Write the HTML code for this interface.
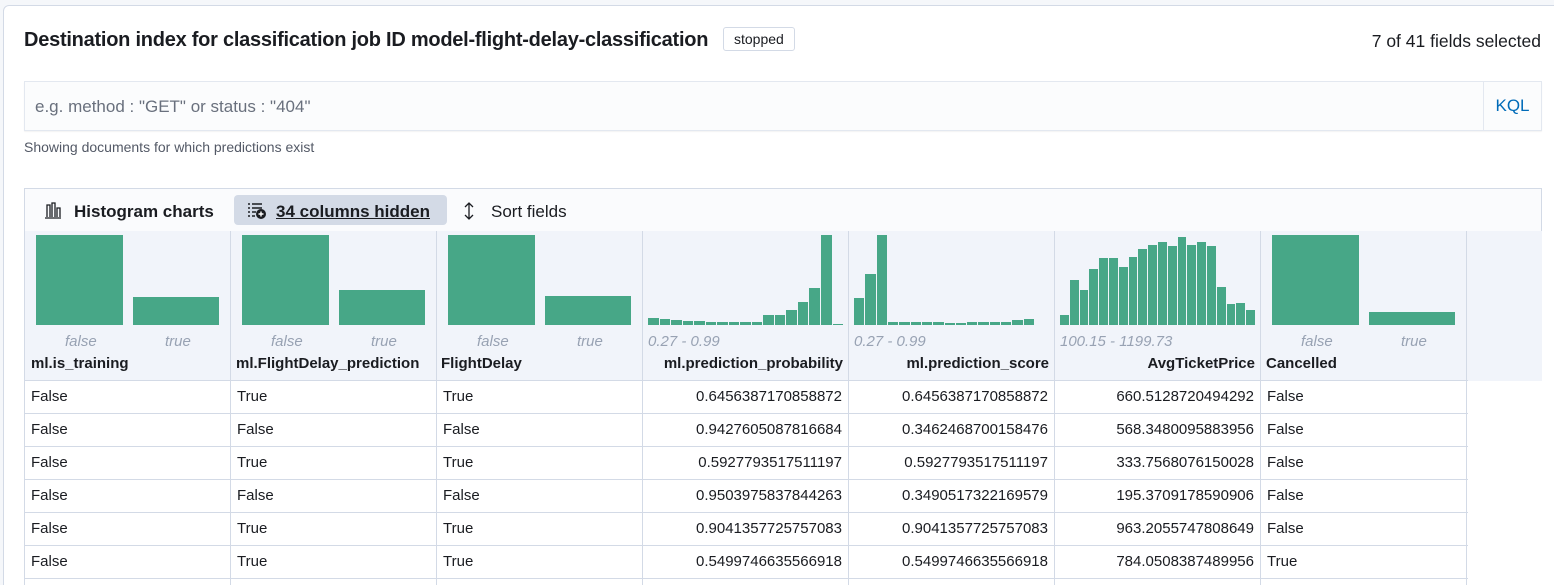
<!DOCTYPE html>
<html style="width:1554px;height:585px;overflow:hidden"><head><style>
*{box-sizing:border-box;margin:0;padding:0}
body{width:1554px;height:585px;overflow:hidden;background:#f5f7fa;font-family:"Liberation Sans",sans-serif;color:#1a1c21;position:relative}
.panel{position:absolute;left:3px;top:5px;width:1560px;height:600px;background:#fff;border:1px solid #d3dae6;border-radius:6px}
.a{position:absolute}
.title{left:24px;top:29px;font-size:20px;font-weight:bold;letter-spacing:-0.25px}
.badge{left:723px;top:27px;height:24px;padding:0 10px;border:1px solid #d3dae6;border-radius:3px;font-size:14px;line-height:22px}
.sel{right:13px;top:31px;font-size:17.5px}
.search{left:24px;top:81px;width:1518px;height:50px;background:#fbfcfd;border:1px solid #e3e8f0;box-shadow:0 1px 1px rgba(0,0,0,.05)}
.search .ph{position:absolute;left:10px;top:15px;font-size:17px;color:#69707d}
.search .kql{position:absolute;right:0;top:0;width:58px;height:48px;border-left:1px solid #e3e8f0;color:#006bb8;font-size:17px;line-height:48px;text-align:center}
.help{left:24px;top:139px;font-size:14px;color:#535966}
.tb{left:24px;top:188px;width:1518px;height:43px;background:#fafbfd;border:1px solid #d3dae6;border-bottom:none}
.tb span{position:absolute;top:13px;font-size:17px}
.hidden{position:absolute;left:209px;top:6px;width:213px;height:30px;background:#d3dae6;border-radius:4px}
.hdr{left:24px;top:231px;width:1518px;height:150px;background:#f1f4fa;border-left:1px solid #d3dae6}
.col{position:absolute;top:231px;width:206px;border-right:1px solid #d3dae6}
.h{height:150px}
.bars{position:absolute;left:5px;right:5px;top:4px;height:90px;display:flex;align-items:flex-end;gap:2px}
.bars i{flex:1;background:#47a787}
.bin{left:11px;right:11px;gap:10px}
.lbl{position:absolute;top:102px;font-size:15px;font-style:italic;color:#98a2b3}
.name{position:absolute;top:124px;font-size:15px;font-weight:bold}
.row{position:absolute;left:24px;width:1444px;height:33px;border-bottom:1px solid #d3dae6;font-size:15px;border-left:1px solid #d3dae6}
.row div{position:absolute;top:0;width:206px;height:33px;line-height:32px;padding:0 6px;border-right:1px solid #d3dae6}
.r{text-align:right}
</style></head><body>
<div class="panel"></div>
<div class="a title">Destination index for classification job ID model-flight-delay-classification</div>
<div class="a badge">stopped</div>
<div class="a sel">7 of 41 fields selected</div>
<div class="a search"><span class="ph">e.g. method : "GET" or status : "404"</span><span class="kql">KQL</span></div>
<div class="a help">Showing documents for which predictions exist</div>
<div class="a tb">
<svg style="position:absolute;left:19px;top:13px" width="18" height="17" viewBox="0 0 18 17" fill="none" stroke="#1a1c21" stroke-width="1.3"><path d="M1 16h16M3 15V3h3v12M8 15V1h3v14M13 15V6h3v9"/></svg>
<span style="left:49px;font-weight:bold">Histogram charts</span>
<div class="hidden"></div>
<svg style="position:absolute;left:222px;top:13px" width="20" height="18" viewBox="0 0 20 18"><path d="M1 2h2M5 2h10M1 6h2M5 6h10M1 10h2M5 10h4M1 14h2M5 14h3" stroke="#1a1c21" stroke-width="1.5"/><circle cx="14" cy="12" r="5" fill="#1a1c21"/><path d="M14 9.5v5M11.5 12h5" stroke="#fff" stroke-width="1.4"/></svg>
<span style="left:251px;font-weight:bold;text-decoration:underline">34 columns hidden</span>
<svg style="position:absolute;left:438px;top:13px" width="12" height="18" viewBox="0 0 12 18" fill="none" stroke="#1a1c21" stroke-width="1.3"><path d="M6 1v16M2 5l4-4 4 4M2 13l4 4 4-4"/></svg>
<span style="left:466px">Sort fields</span>
</div>
<div class="a hdr"></div>
<div class="col h" style="left:25px"><div class="bars bin"><i style="height:90px"></i><i style="height:28px"></i></div><span class="lbl" style="left:40px">false</span><span class="lbl" style="left:140px">true</span><span class="name" style="left:6px">ml.is_training</span></div>
<div class="col h" style="left:231px"><div class="bars bin"><i style="height:90px"></i><i style="height:35px"></i></div><span class="lbl" style="left:40px">false</span><span class="lbl" style="left:140px">true</span><span class="name" style="left:5px">ml.FlightDelay_prediction</span></div>
<div class="col h" style="left:437px"><div class="bars bin"><i style="height:90px"></i><i style="height:29px"></i></div><span class="lbl" style="left:40px">false</span><span class="lbl" style="left:140px">true</span><span class="name" style="left:4px">FlightDelay</span></div>
<div class="col h" style="left:643px"><div class="bars" style="gap:1px"><i style="height:7px"></i><i style="height:6px"></i><i style="height:5px"></i><i style="height:4px"></i><i style="height:4px"></i><i style="height:3px"></i><i style="height:3px"></i><i style="height:3px"></i><i style="height:3px"></i><i style="height:3px"></i><i style="height:10px"></i><i style="height:10px"></i><i style="height:15px"></i><i style="height:23px"></i><i style="height:37px"></i><i style="height:90px"></i><i style="height:1px"></i></div><span class="lbl" style="left:5px">0.27 - 0.99</span><span class="name" style="right:5px">ml.prediction_probability</span></div>
<div class="col h" style="left:849px"><div class="bars" style="gap:1px;right:20px"><i style="height:27px"></i><i style="height:51px"></i><i style="height:90px"></i><i style="height:3px"></i><i style="height:3px"></i><i style="height:3px"></i><i style="height:3px"></i><i style="height:3px"></i><i style="height:2px"></i><i style="height:2px"></i><i style="height:3px"></i><i style="height:3px"></i><i style="height:3px"></i><i style="height:3px"></i><i style="height:5px"></i><i style="height:6px"></i></div><span class="lbl" style="left:5px">0.27 - 0.99</span><span class="name" style="right:5px">ml.prediction_score</span></div>
<div class="col h" style="left:1055px"><div class="bars" style="gap:1px"><i style="height:10px"></i><i style="height:45px"></i><i style="height:35px"></i><i style="height:56px"></i><i style="height:67px"></i><i style="height:67px"></i><i style="height:58px"></i><i style="height:68px"></i><i style="height:76px"></i><i style="height:80px"></i><i style="height:83px"></i><i style="height:79px"></i><i style="height:88px"></i><i style="height:80px"></i><i style="height:83px"></i><i style="height:79px"></i><i style="height:38px"></i><i style="height:21px"></i><i style="height:22px"></i><i style="height:15px"></i></div><span class="lbl" style="left:5px">100.15 - 1199.73</span><span class="name" style="right:5px">AvgTicketPrice</span></div>
<div class="col h" style="left:1261px"><div class="bars bin"><i style="height:90px"></i><i style="height:13px"></i></div><span class="lbl" style="left:40px">false</span><span class="lbl" style="left:140px">true</span><span class="name" style="left:5px">Cancelled</span></div>
<div class="a" style="left:24px;top:380px;width:1444px;border-top:1px solid #d3dae6"></div>

<div class="row" style="top:381px"><div style="left:0">False</div><div style="left:206px">True</div><div style="left:412px">True</div><div class="r" style="left:618px">0.6456387170858872</div><div class="r" style="left:824px">0.6456387170858872</div><div class="r" style="left:1030px">660.5128720494292</div><div style="left:1236px">False</div></div>
<div class="row" style="top:414px"><div style="left:0">False</div><div style="left:206px">False</div><div style="left:412px">False</div><div class="r" style="left:618px">0.9427605087816684</div><div class="r" style="left:824px">0.3462468700158476</div><div class="r" style="left:1030px">568.3480095883956</div><div style="left:1236px">False</div></div>
<div class="row" style="top:447px"><div style="left:0">False</div><div style="left:206px">True</div><div style="left:412px">True</div><div class="r" style="left:618px">0.5927793517511197</div><div class="r" style="left:824px">0.5927793517511197</div><div class="r" style="left:1030px">333.7568076150028</div><div style="left:1236px">False</div></div>
<div class="row" style="top:480px"><div style="left:0">False</div><div style="left:206px">False</div><div style="left:412px">False</div><div class="r" style="left:618px">0.9503975837844263</div><div class="r" style="left:824px">0.3490517322169579</div><div class="r" style="left:1030px">195.3709178590906</div><div style="left:1236px">False</div></div>
<div class="row" style="top:513px"><div style="left:0">False</div><div style="left:206px">True</div><div style="left:412px">True</div><div class="r" style="left:618px">0.9041357725757083</div><div class="r" style="left:824px">0.9041357725757083</div><div class="r" style="left:1030px">963.2055747808649</div><div style="left:1236px">False</div></div>
<div class="row" style="top:546px"><div style="left:0">False</div><div style="left:206px">True</div><div style="left:412px">True</div><div class="r" style="left:618px">0.5499746635566918</div><div class="r" style="left:824px">0.5499746635566918</div><div class="r" style="left:1030px">784.0508387489956</div><div style="left:1236px">True</div></div>
<div class="row" style="top:579px;height:6px;border-bottom:none"><div style="left:0;height:6px"></div><div style="left:206px;height:6px"></div><div style="left:412px;height:6px"></div><div style="left:618px;height:6px"></div><div style="left:824px;height:6px"></div><div style="left:1030px;height:6px"></div><div style="left:1236px;height:6px"></div></div>
</body></html>
